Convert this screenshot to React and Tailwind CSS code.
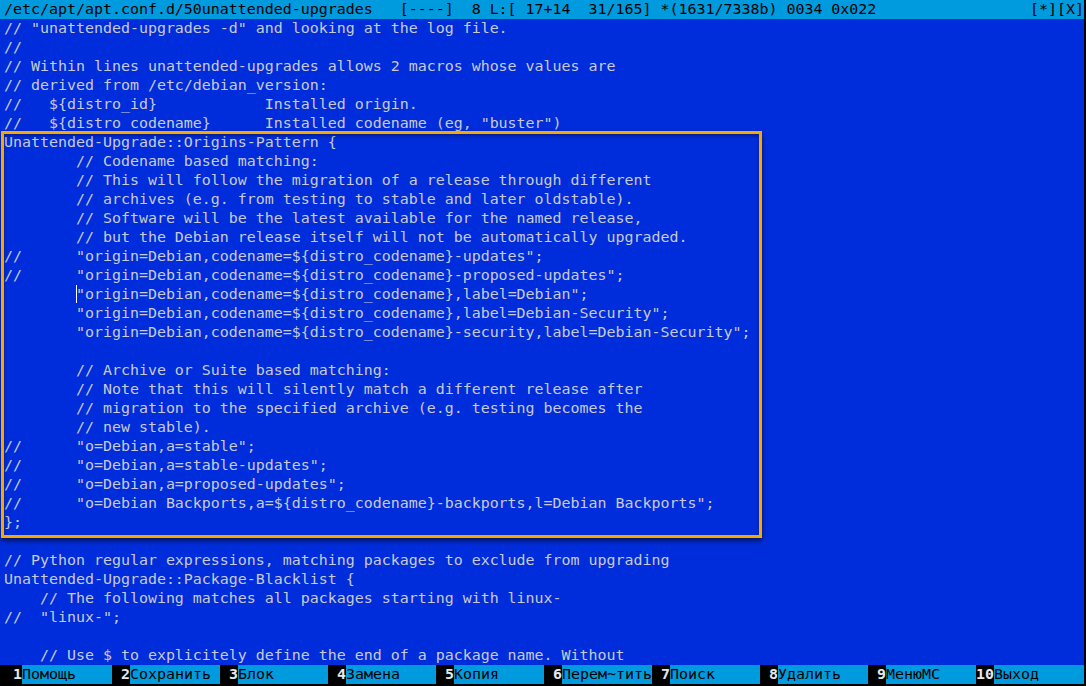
const lines = [
  '// "unattended-upgrades -d" and looking at the log file.',
  '//',
  '// Within lines unattended-upgrades allows 2 macros whose values are',
  '// derived from /etc/debian_version:',
  '//   ${distro_id}            Installed origin.',
  '//   ${distro_codename}      Installed codename (eg, "buster")',
  'Unattended-Upgrade::Origins-Pattern {',
  '        // Codename based matching:',
  '        // This will follow the migration of a release through different',
  '        // archives (e.g. from testing to stable and later oldstable).',
  '        // Software will be the latest available for the named release,',
  '        // but the Debian release itself will not be automatically upgraded.',
  '//      "origin=Debian,codename=${distro_codename}-updates";',
  '//      "origin=Debian,codename=${distro_codename}-proposed-updates";',
  'CURSOR',
  '        "origin=Debian,codename=${distro_codename},label=Debian-Security";',
  '        "origin=Debian,codename=${distro_codename}-security,label=Debian-Security";',
  '',
  '        // Archive or Suite based matching:',
  '        // Note that this will silently match a different release after',
  '        // migration to the specified archive (e.g. testing becomes the',
  '        // new stable).',
  '//      "o=Debian,a=stable";',
  '//      "o=Debian,a=stable-updates";',
  '//      "o=Debian,a=proposed-updates";',
  '//      "o=Debian Backports,a=${distro_codename}-backports,l=Debian Backports";',
  '};',
  '',
  '// Python regular expressions, matching packages to exclude from upgrading',
  'Unattended-Upgrade::Package-Blacklist {',
  '    // The following matches all packages starting with linux-',
  '//  "linux-";',
  '',
  '    // Use $ to explicitely define the end of a package name. Without',
];

const keys = [
  ['1', 'Помощь'],
  ['2', 'Сохранить'],
  ['3', 'Блок'],
  ['4', 'Замена'],
  ['5', 'Копия'],
  ['6', 'Перем~тить'],
  ['7', 'Поиск'],
  ['8', 'Удалить'],
  ['9', 'МенюMC'],
  ['10', 'Выход'],
];

export default function App() {
  return (
    <div className="w-[1086px] h-[686px] bg-black overflow-hidden relative">
      <div
        className="w-[1084px] h-[684px] flex flex-col text-[14.95px] leading-[19px] whitespace-pre"
        style={{ fontFamily: '"DejaVu Sans Mono", "Liberation Mono", monospace' }}
      >
        {/* status line */}
        <div className="h-[19px] bg-[#009bde] text-black pl-[4px] flex justify-between">
          <span>/etc/apt/apt.conf.d/50unattended-upgrades   [----]  8 L:[ 17+14  31/165] *(1631/7338b) 0034 0x022</span>
          <span>[*][X]</span>
        </div>

        {/* editor body */}
        <div className="flex-1 bg-[#002ddb] text-[#c8cad6] pl-[4px]">
          {lines.map((line, i) =>
            line === 'CURSOR' ? (
              <div key={i} className="h-[19px]">
                {'        '}
                <span className="shadow-[inset_1px_0_0_#ffffff]">"</span>
                {'origin=Debian,codename=${distro_codename},label=Debian";'}
              </div>
            ) : (
              <div key={i} className="h-[19px]">{line}</div>
            )
          )}
        </div>

        {/* function keys */}
        <div className="h-[19px] flex bg-black">
          {keys.map(([n, label], i) => (
            <div key={n} className="flex">
              <span className={`bg-black text-[#e8e8e8] font-bold text-right ${i === 0 ? 'w-[22px]' : 'w-[18px]'}`}>
                {n.length === 1 ? ' ' + n : n}
              </span>
              <span className="bg-[#009bde] text-black w-[90px]">{label}</span>
            </div>
          ))}
        </div>
      </div>

      {/* highlight frame */}
      <div className="absolute left-[1px] top-[131px] w-[761px] h-[407px] border-[3px] border-[#f7a800] shadow-[0_3px_5px_rgba(0,0,0,0.55),inset_0_2px_4px_rgba(0,0,0,0.35)]" />
    </div>
  );
}
